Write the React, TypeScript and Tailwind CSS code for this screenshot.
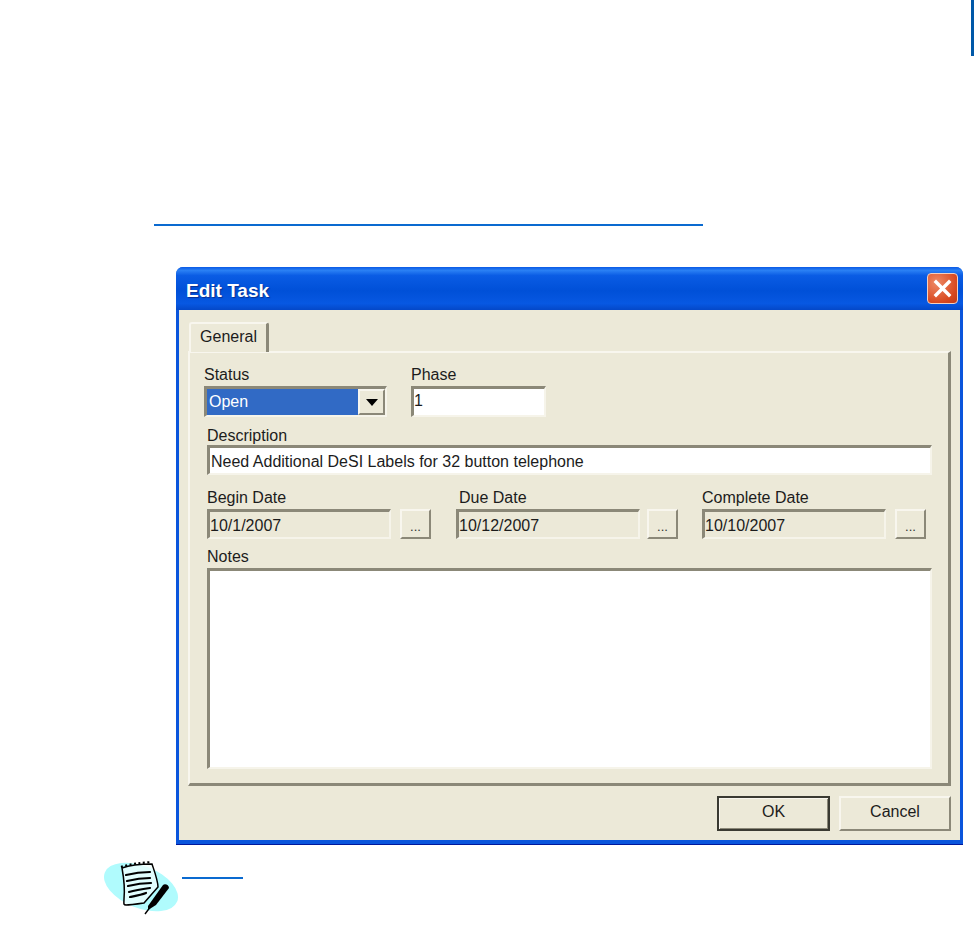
const font = { fontFamily: '"Liberation Sans", sans-serif' };

function Label({ children, className = "" }: { children: string; className?: string }) {
  return <div className={`h-[20px] text-[16px] leading-[18px] text-[#1c1c1c] ${className}`}>{children}</div>;
}

const sunken = "border-2 border-t-[3px] border-l-[3px] border-t-[#8b8878] border-l-[#8b8878] border-r-[#f6f4ea] border-b-[#f6f4ea]";

function TextField({ value, className = "", bg = "bg-white" }: { value: string; className?: string; bg?: string }) {
  return (
    <div className={`${sunken} ${bg} ${className} flex items-center text-[16px] leading-[20px] text-[#1c1c1c] whitespace-nowrap`}>
      {value}
    </div>
  );
}

function MoreButton() {
  return (
    <div className="w-[31px] h-[30px] border-2 border-t-[#f8f6ee] border-l-[#f8f6ee] border-r-[#8b8878] border-b-[#8b8878] bg-[#ece9d8] flex items-end justify-center pb-[2px] text-[13px] leading-[16px] text-[#333]">
      ...
    </div>
  );
}

function NoteIcon() {
  return (
    <svg width="76" height="56" viewBox="0 0 76 56" className="shrink-0">
      <ellipse cx="37" cy="28" rx="39" ry="21" fill="#b0fbfd" transform="rotate(22 37 28)" />
      <path d="M18 9 C 26 6, 36 5, 48 5 C 51 14, 54 22, 54 28 L 40 44 C 33 45, 26 46, 22 46 C 19 46, 20 44, 20 40 C 21 30, 20 20, 18 9 Z" fill="#f2fffe" fillOpacity="0.75" stroke="#000" strokeWidth="1.5" />
      <path d="M17 8 C 26 5 36 4 48 3" fill="none" stroke="#000" strokeWidth="2.2" strokeDasharray="2 2.5" />
      <g fill="none" stroke="#000" strokeWidth="2.2" strokeLinecap="round">
        <path d="M22 16 C 30 14 38 13 46 13" />
        <path d="M23 22 C 31 20 39 19 46 19" />
        <path d="M24 27 C 32 25 39 24 47 24" />
        <path d="M25 33 C 32 31 39 30 46 29" />
        <path d="M26 38 C 31 37 37 36 42 34" />
      </g>
      <path d="M44 47 L 59 26 C 61 24 65 26 65 29 L 52 46 L 44 51 Z" fill="#000" />
      <path d="M41 55 L 47 47" stroke="#000" strokeWidth="1.4" />
    </svg>
  );
}

export default function App() {
  return (
    <div className="w-[974px] h-[934px] bg-white overflow-hidden flex flex-col" style={font}>
      <div className="h-[56px] flex justify-end">
        <div className="w-[3px] h-full bg-[#0058a8]" />
      </div>
      <div className="ml-[154px] mt-[168px] w-[549px] h-[2px] bg-[#0a6ad0]" />
      <div className="ml-[176px] mt-[41px] w-[787px] h-[578px] rounded-t-[7px] flex flex-col bg-[#0a55dc] overflow-hidden">
        <div className="h-[43px] shrink-0 flex items-center justify-between pl-[10px] pr-[5px] bg-[linear-gradient(180deg,#0a5ae6_0%,#2a80f4_8%,#0a5ce4_20%,#0050d8_55%,#0758e2_85%,#0448c8_100%)]">
          <span className="text-[19px] font-bold text-white pt-[6px] [text-shadow:1px_1px_1px_#0a2f90]">Edit Task</span>
          <div className="w-[31px] h-[31px] rounded-[4px] border border-[#f3d0c0] bg-[radial-gradient(circle_at_30%_30%,#ee8a66,#d8481f_70%,#c03a18)] flex items-center justify-center">
            <svg width="19" height="19" viewBox="0 0 19 19"><path d="M3 3 L16 16 M16 3 L3 16" stroke="#fff" strokeWidth="3.4" strokeLinecap="square" /></svg>
          </div>
        </div>
        <div className="flex-1 mx-[3px] mb-[3px] border-b-[1px] border-[#0a55dc] bg-[#ece9d8] flex flex-col pl-[9px] pr-[9px] relative">
          <div className="h-[41px] shrink-0 flex items-end pl-[1px] pt-[12px] relative z-10">
            <div className="w-[80px] h-[30px] -mb-[1px] pb-[3px] rounded-t-[3px] border-t-2 border-l-2 border-r-[3px] border-t-[#f8f6ee] border-l-[#f8f6ee] border-r-[#8b8878] bg-[#ece9d8] flex items-center justify-center text-[16px] text-[#1c1c1c]">General</div>
          </div>
          <div className="h-[435px] shrink-0 border-2 border-r-[3px] border-b-[3px] border-t-[#f8f6ee] border-l-[#f8f6ee] border-r-[#8b8878] border-b-[#8b8878] pl-[14px] pr-[17px] pt-[13px] flex flex-col">
            <div className="flex gap-[24px]">
              <div className="flex flex-col">
                <Label>Status</Label>
                <div className={`${sunken} w-[183px] h-[31px] bg-white flex p-0`}>
                  <div className="flex-1 bg-[#316ac5] text-white text-[16px] leading-[25px] pl-[2px]">Open</div>
                  <div className="w-[27px] bg-[#ece9d8] border-2 border-t-[#f8f6ee] border-l-[#f8f6ee] border-r-[#8b8878] border-b-[#8b8878] flex items-center justify-center">
                    <svg width="12" height="7" viewBox="0 0 12 7"><path d="M0 0 H12 L6 7 Z" fill="#000" /></svg>
                  </div>
                </div>
              </div>
              <div className="flex flex-col">
                <Label>Phase</Label>
                <TextField value="1" className="w-[135px] h-[31px] pb-[2px]" />
              </div>
            </div>
            <div className="pl-[3px] mt-[8px] flex flex-col">
              <Label className="pt-[2px]">Description</Label>
              <TextField value="Need Additional DeSI Labels for 32 button telephone" className="w-[725px] h-[30px] pl-[1px] pt-[3px]" />
              <div className="flex mt-[11px]">
                <div className="w-[249px] flex flex-col">
                  <Label className="mb-[3px] pt-[3px]">Begin Date</Label>
                  <div className="flex gap-[9px]">
                    <TextField value="10/1/2007" bg="bg-[#ece9d8]" className="w-[184px] h-[30px] pt-[2px]" />
                    <MoreButton />
                  </div>
                </div>
                <div className="w-[246px] flex flex-col">
                  <Label className="mb-[3px] pl-[3px] pt-[3px]">Due Date</Label>
                  <div className="flex gap-[7px]">
                    <TextField value="10/12/2007" bg="bg-[#ece9d8]" className="w-[184px] h-[30px] pt-[2px]" />
                    <MoreButton />
                  </div>
                </div>
                <div className="flex flex-col">
                  <Label className="mb-[3px] pt-[3px]">Complete Date</Label>
                  <div className="flex gap-[9px]">
                    <TextField value="10/10/2007" bg="bg-[#ece9d8]" className="w-[184px] h-[30px] pt-[2px]" />
                    <MoreButton />
                  </div>
                </div>
              </div>
              <Label className="mt-[6px] mb-[3px] pt-[3px]">Notes</Label>
              <div className={`${sunken} w-[725px] h-[201px] bg-white`} />
            </div>
          </div>
          <div className="flex justify-end gap-[9px] mt-[10px]">
            <div className="w-[113px] h-[35px] pb-[3px] border-2 border-[#3a3a32] bg-[#ece9d8] flex items-center justify-center text-[16px] text-[#1c1c1c] shadow-[inset_1px_1px_0_#f8f6ee,inset_-1px_-1px_0_#8b8878]">OK</div>
            <div className="w-[112px] h-[35px] pb-[3px] border-2 border-t-[#f8f6ee] border-l-[#f8f6ee] border-r-[#8b8878] border-b-[#8b8878] bg-[#ece9d8] flex items-center justify-center text-[16px] text-[#1c1c1c]">Cancel</div>
          </div>
        </div>
        <div className="h-[1px] bg-[#00189c]" />
      </div>
      <div className="ml-[104px] mt-[14px] flex">
        <NoteIcon />
        <div className="ml-[2px] mt-[18px] w-[61px] h-[2px] bg-[#0a6ad0]" />
      </div>
    </div>
  );
}
